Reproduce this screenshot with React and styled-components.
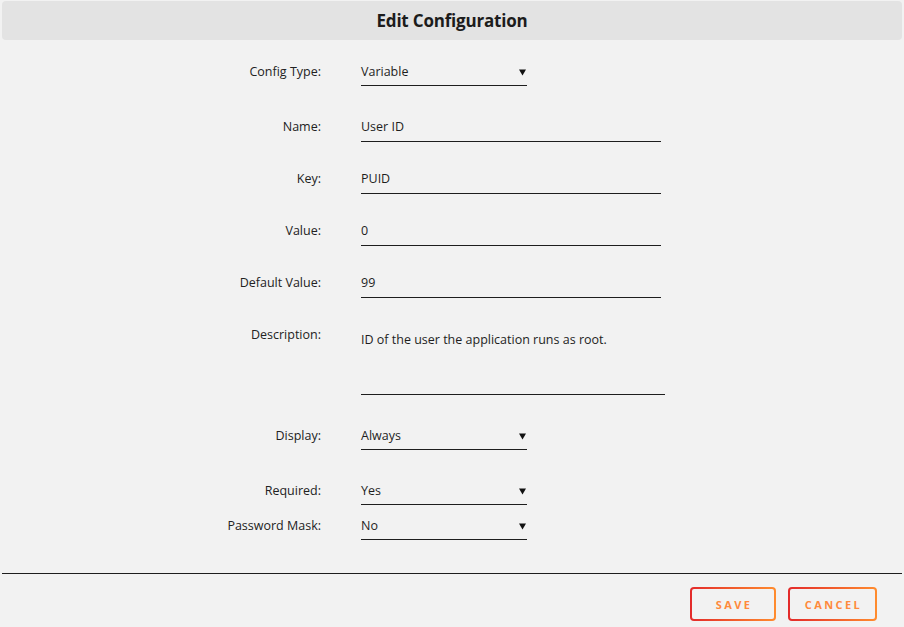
import React from "react";
import styled, { createGlobalStyle } from "styled-components";

const Global = createGlobalStyle`
  html, body { margin: 0; padding: 0; background: #f2f2f2; }
  body { font-family: "Open Sans", "Noto Sans", sans-serif; color: #222; }
  * { box-sizing: border-box; }
`;

const Page = styled.div`
  padding: 1px 2px 0 2px;
  width: 904px;
  height: 627px;
  display: flex;
  flex-direction: column;
`;

const Header = styled.header`
  height: 39px;
  background: #e3e3e3;
  border-radius: 4px;
  display: flex;
  align-items: center;
  justify-content: center;
`;

const Title = styled.h1`
  margin: 0;
  font-size: 17px;
  font-weight: 700;
  color: #1c1c1c;
  letter-spacing: -0.2px;
`;

const Form = styled.div`
  display: flex;
  flex-direction: column;
  padding-top: 23px;
`;

const Row = styled.div`
  display: grid;
  grid-template-columns: 319px auto;
  column-gap: 40px;
  align-items: start;
  margin-top: ${(p) => p.$gap || 0}px;
`;

const Label = styled.label`
  text-align: right;
  font-size: 12.5px;
  line-height: 16px;
  padding-top: 1px;
  color: #222;
`;

const Field = styled.div`
  position: relative;
  width: ${(p) => p.$width}px;
  height: ${(p) => p.$height || 24}px;
  border-bottom: 1px solid #1e1e1e;
  font-size: 12.5px;
  line-height: 16px;
  color: #1e1e1e;
  padding-top: ${(p) => p.$padTop || 1}px;
`;

const Arrow = styled.svg`
  position: absolute;
  right: 1px;
  top: 6px;
`;

const Footer = styled.footer`
  margin-top: 33px;
  border-top: 1px solid #1e1e1e;
  display: flex;
  justify-content: flex-end;
  gap: 12px;
  padding: 13px 25px 0 0;
`;

const Button = styled.button`
  width: ${(p) => p.$width}px;
  height: 34px;
  border: none;
  border-radius: 4px;
  background: linear-gradient(90deg, #e32a2a, #ff8c2e);
  padding: 2px;
  cursor: pointer;
  font-family: "Open Sans", "Noto Sans", sans-serif;
`;

const ButtonInner = styled.span`
  display: flex;
  align-items: center;
  justify-content: center;
  width: 100%;
  height: 100%;
  background: #f2f2f2;
  border-radius: 2px;
  font-size: 11px;
  font-weight: 700;
  letter-spacing: 2.4px;
  color: #ff8a3c;
  padding-left: 2px;
`;

const Select = ({ value }) => (
  <Field $width={166} $height={23}>
    {value}
    <Arrow width="7" height="7" viewBox="0 0 7 7">
      <polygon points="0,0.5 7,0.5 3.5,6.5" fill="#111" />
    </Arrow>
  </Field>
);

export default function App() {
  return (
    <>
      <Global />
      <Page>
        <Header>
          <Title>Edit Configuration</Title>
        </Header>
        <Form>
          <Row>
            <Label>Config Type:</Label>
            <Select value="Variable" />
          </Row>
          <Row $gap={32}>
            <Label>Name:</Label>
            <Field $width={300}>User ID</Field>
          </Row>
          <Row $gap={28}>
            <Label>Key:</Label>
            <Field $width={300}>PUID</Field>
          </Row>
          <Row $gap={28}>
            <Label>Value:</Label>
            <Field $width={300}>0</Field>
          </Row>
          <Row $gap={28}>
            <Label>Default Value:</Label>
            <Field $width={300}>99</Field>
          </Row>
          <Row $gap={28}>
            <Label>Description:</Label>
            <Field $width={304} $height={69} $padTop={6}>
              ID of the user the application runs as root.
            </Field>
          </Row>
          <Row $gap={32}>
            <Label>Display:</Label>
            <Select value="Always" />
          </Row>
          <Row $gap={32}>
            <Label>Required:</Label>
            <Select value="Yes" />
          </Row>
          <Row $gap={12}>
            <Label>Password Mask:</Label>
            <Select value="No" />
          </Row>
        </Form>
        <Footer>
          <Button $width={86}>
            <ButtonInner>SAVE</ButtonInner>
          </Button>
          <Button $width={89}>
            <ButtonInner>CANCEL</ButtonInner>
          </Button>
        </Footer>
      </Page>
    </>
  );
}
